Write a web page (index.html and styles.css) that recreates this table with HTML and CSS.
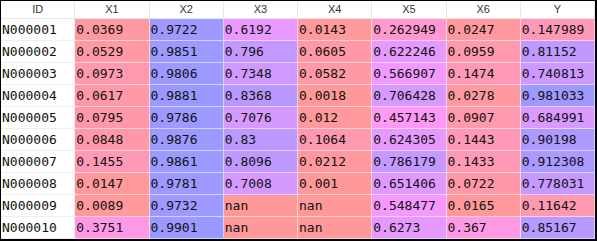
FILE: index.html
```html
<!DOCTYPE html>
<html>
<head>
<meta charset="utf-8">
<link rel="stylesheet" href="styles.css">
</head>
<body>
<div class="frame">
  <div class="grid">
    <div class="hd">ID</div><div class="hd">X1</div><div class="hd">X2</div><div class="hd">X3</div><div class="hd">X4</div><div class="hd">X5</div><div class="hd">X6</div><div class="hd">Y</div>

    <div class="id">N000001</div>
    <div class="c" style="background:rgb(255,153,161)">0.0369</div>
    <div class="c" style="background:rgb(159,153,255)">0.9722</div>
    <div class="c" style="background:rgb(231,153,255)">0.6192</div>
    <div class="c" style="background:rgb(255,153,156)">0.0143</div>
    <div class="c" style="background:rgb(255,153,207)">0.262949</div>
    <div class="c" style="background:rgb(255,153,158)">0.0247</div>
    <div class="c" style="background:rgb(255,153,183)">0.147989</div>

    <div class="id">N000002</div>
    <div class="c" style="background:rgb(255,153,164)">0.0529</div>
    <div class="c" style="background:rgb(156,153,255)">0.9851</div>
    <div class="c" style="background:rgb(195,153,255)">0.796</div>
    <div class="c" style="background:rgb(255,153,165)">0.0605</div>
    <div class="c" style="background:rgb(230,153,255)">0.622246</div>
    <div class="c" style="background:rgb(255,153,173)">0.0959</div>
    <div class="c" style="background:rgb(191,153,255)">0.81152</div>

    <div class="id">N000003</div>
    <div class="c" style="background:rgb(255,153,173)">0.0973</div>
    <div class="c" style="background:rgb(157,153,255)">0.9806</div>
    <div class="c" style="background:rgb(207,153,255)">0.7348</div>
    <div class="c" style="background:rgb(255,153,165)">0.0582</div>
    <div class="c" style="background:rgb(241,153,255)">0.566907</div>
    <div class="c" style="background:rgb(255,153,183)">0.1474</div>
    <div class="c" style="background:rgb(206,153,255)">0.740813</div>

    <div class="id">N000004</div>
    <div class="c" style="background:rgb(255,153,166)">0.0617</div>
    <div class="c" style="background:rgb(155,153,255)">0.9881</div>
    <div class="c" style="background:rgb(186,153,255)">0.8368</div>
    <div class="c" style="background:rgb(255,153,153)">0.0018</div>
    <div class="c" style="background:rgb(213,153,255)">0.706428</div>
    <div class="c" style="background:rgb(255,153,159)">0.0278</div>
    <div class="c" style="background:rgb(157,153,255)">0.981033</div>

    <div class="id">N000005</div>
    <div class="c" style="background:rgb(255,153,169)">0.0795</div>
    <div class="c" style="background:rgb(157,153,255)">0.9786</div>
    <div class="c" style="background:rgb(213,153,255)">0.7076</div>
    <div class="c" style="background:rgb(255,153,155)">0.012</div>
    <div class="c" style="background:rgb(255,153,246)">0.457143</div>
    <div class="c" style="background:rgb(255,153,172)">0.0907</div>
    <div class="c" style="background:rgb(217,153,255)">0.684991</div>

    <div class="id">N000006</div>
    <div class="c" style="background:rgb(255,153,170)">0.0848</div>
    <div class="c" style="background:rgb(156,153,255)">0.9876</div>
    <div class="c" style="background:rgb(188,153,255)">0.83</div>
    <div class="c" style="background:rgb(255,153,175)">0.1064</div>
    <div class="c" style="background:rgb(230,153,255)">0.624305</div>
    <div class="c" style="background:rgb(255,153,182)">0.1443</div>
    <div class="c" style="background:rgb(173,153,255)">0.90198</div>

    <div class="id">N000007</div>
    <div class="c" style="background:rgb(255,153,183)">0.1455</div>
    <div class="c" style="background:rgb(156,153,255)">0.9861</div>
    <div class="c" style="background:rgb(192,153,255)">0.8096</div>
    <div class="c" style="background:rgb(255,153,157)">0.0212</div>
    <div class="c" style="background:rgb(197,153,255)">0.786179</div>
    <div class="c" style="background:rgb(255,153,182)">0.1433</div>
    <div class="c" style="background:rgb(171,153,255)">0.912308</div>

    <div class="id">N000008</div>
    <div class="c" style="background:rgb(255,153,156)">0.0147</div>
    <div class="c" style="background:rgb(157,153,255)">0.9781</div>
    <div class="c" style="background:rgb(214,153,255)">0.7008</div>
    <div class="c" style="background:rgb(255,153,153)">0.001</div>
    <div class="c" style="background:rgb(224,153,255)">0.651406</div>
    <div class="c" style="background:rgb(255,153,168)">0.0722</div>
    <div class="c" style="background:rgb(198,153,255)">0.778031</div>

    <div class="id">N000009</div>
    <div class="c" style="background:rgb(255,153,155)">0.0089</div>
    <div class="c" style="background:rgb(158,153,255)">0.9732</div>
    <div class="c" style="background:rgb(255,153,153)">nan</div>
    <div class="c" style="background:rgb(255,153,153)">nan</div>
    <div class="c" style="background:rgb(245,153,255)">0.548477</div>
    <div class="c" style="background:rgb(255,153,156)">0.0165</div>
    <div class="c" style="background:rgb(255,153,177)">0.11642</div>

    <div class="id">N000010</div>
    <div class="c" style="background:rgb(255,153,230)">0.3751</div>
    <div class="c" style="background:rgb(155,153,255)">0.9901</div>
    <div class="c" style="background:rgb(255,153,153)">nan</div>
    <div class="c" style="background:rgb(255,153,153)">nan</div>
    <div class="c" style="background:rgb(229,153,255)">0.6273</div>
    <div class="c" style="background:rgb(255,153,228)">0.367</div>
    <div class="c" style="background:rgb(183,153,255)">0.85167</div>
  </div>
</div>
</body>
</html>
```

FILE: styles.css
```css
html, body {
  margin: 0;
  padding: 0;
  background: #ffffff;
}

.frame {
  width: 597px;
  height: 241px;
  box-sizing: border-box;
  border-style: solid;
  border-color: #000000;
  border-width: 1px 2px 2px 1px;
  overflow: hidden;
  background: #ffffff;
}

.grid {
  display: grid;
  grid-template-columns: repeat(8, 1fr);
  grid-template-rows: 18px repeat(10, 22px);
}

.hd {
  box-sizing: border-box;
  border-right: 1px solid #e8e8e8;
  border-bottom: 1px solid #e8e8e8;
  font-family: "Liberation Sans", Arial, sans-serif;
  font-size: 11px;
  color: #333333;
  text-align: center;
  line-height: 17px;
}

.id, .c {
  box-sizing: border-box;
  border-right: 1px solid rgba(255, 255, 255, 0.55);
  border-bottom: 1px solid rgba(255, 255, 255, 0.55);
  font-family: "DejaVu Sans Mono", "Liberation Mono", monospace;
  font-size: 13px;
  line-height: 21px;
  color: #111111;
  padding-left: 1px;
  white-space: nowrap;
}

.id {
  border-color: #eeeeee;
  background: #ffffff;
}
```
